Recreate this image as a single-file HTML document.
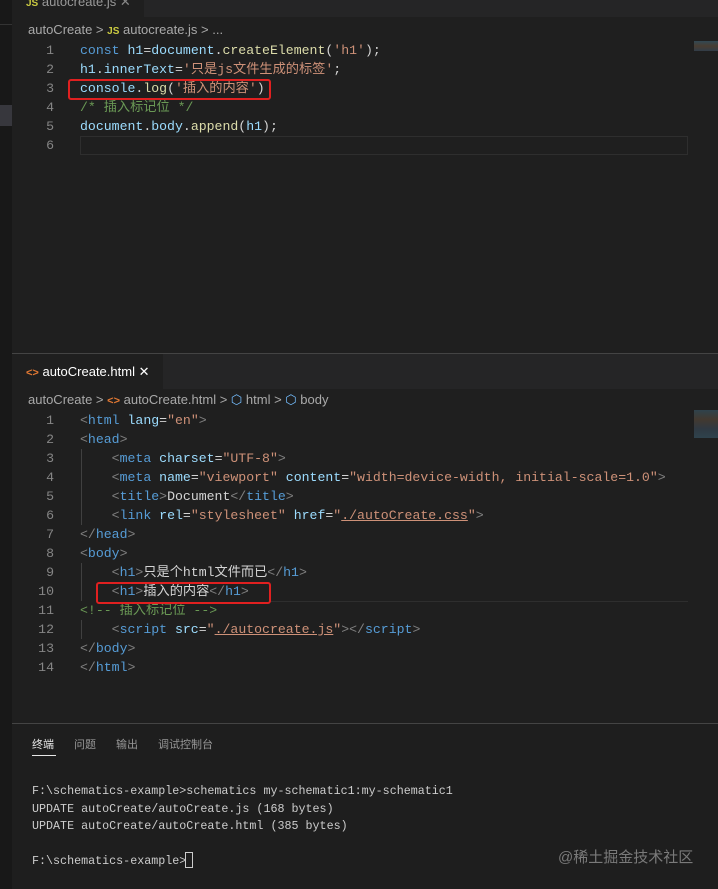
<!DOCTYPE html>
<html><head><meta charset="utf-8"><style>
*{margin:0;padding:0;box-sizing:border-box}
body{width:718px;height:889px;background:#1f1f1f;position:relative;overflow:hidden;font-family:"Liberation Sans","Noto Sans CJK SC",sans-serif;color:#ccc}
.abs{position:absolute}
.code{font-family:"Liberation Mono","Noto Sans CJK SC",monospace;font-size:13.2px;white-space:pre;line-height:19px}
.ln{position:absolute;width:54px;text-align:right;color:#858585;font-family:"Liberation Mono",monospace;font-size:13.2px;line-height:19px}
.k{color:#569cd6}.v{color:#9cdcfe}.f{color:#dcdcaa}.s{color:#ce9178}.c{color:#6a9955}.p{color:#d4d4d4}.g{color:#808080}.w{color:#d4d4d4}
.u{text-decoration:underline;text-decoration-color:#ce9178}
.crumb{font-size:13px;color:#a9a9a9}
.red{position:absolute;border:2px solid #e02020;border-radius:3px}
.term{font-family:"Liberation Mono","Noto Sans CJK SC",monospace;font-size:11.7px;color:#ccc;white-space:pre;line-height:17.5px}
</style></head><body>
<!-- left strip -->
<div class="abs" style="left:0;top:0;width:12px;height:889px;background:#181818"></div>
<div class="abs" style="left:0;top:24px;width:12px;height:1px;background:#333"></div>
<div class="abs" style="left:0;top:105px;width:12px;height:21px;background:#37373d"></div>
<!-- top tab bar -->
<div class="abs" style="left:12px;top:0;width:706px;height:17px;background:#252526"></div>
<div class="abs" style="left:12px;top:0;width:132px;height:17px;background:#1f1f1f"></div>
<div class="abs" style="left:26px;top:-6px;font-size:13px;color:#999"><span style="color:#cbcb41;font-weight:bold;font-size:10px">JS</span> autocreate.js <span style="color:#888">✕</span></div>
<div class="abs crumb" style="left:28px;top:22px">autoCreate &gt; <span style="color:#cbcb41;font-weight:bold;font-size:10px">JS</span> autocreate.js &gt; ...</div>
<!-- JS editor -->
<div class="ln" style="left:0;top:41px">1<br>2<br>3<br>4<br>5<br>6</div>
<div class="abs" style="left:80px;top:136px;width:608px;height:19px;border:1px solid #2e2e2e"></div>
<div class="abs code" style="left:80px;top:41px"><span class="k">const</span> <span class="v">h1</span><span class="w">=</span><span class="v">document</span><span class="w">.</span><span class="f">createElement</span><span class="w">(</span><span class="s">'h1'</span><span class="w">);</span>
<span class="v">h1</span><span class="w">.</span><span class="v">innerText</span><span class="w">=</span><span class="s">'只是js文件生成的标签'</span><span class="w">;</span>
<span class="v">console</span><span class="w">.</span><span class="f">log</span><span class="w">(</span><span class="s">'插入的内容'</span><span class="w">)</span>
<span class="c">/* 插入标记位 */</span>
<span class="v">document</span><span class="w">.</span><span class="v">body</span><span class="w">.</span><span class="f">append</span><span class="w">(</span><span class="v">h1</span><span class="w">);</span></div>
<div class="red" style="left:68px;top:79px;width:203px;height:21px"></div>
<div class="abs" style="left:694px;top:41px;width:24px;height:10px;background:linear-gradient(#3a5a6a,#5a4a3a,#3a4a5a);opacity:.7"></div>
<!-- split -->
<div class="abs" style="left:12px;top:353px;width:706px;height:1px;background:#444"></div>
<div class="abs" style="left:12px;top:354px;width:706px;height:35px;background:#252526"></div>
<div class="abs" style="left:12px;top:354px;width:151px;height:35px;background:#1f1f1f"></div>
<div class="abs" style="left:26px;top:364px;font-size:13px;color:#fff"><span style="color:#e37933;font-weight:bold;font-size:11px">&lt;&gt;</span> autoCreate.html ✕</div>
<div class="abs crumb" style="left:28px;top:392px">autoCreate &gt; <span style="color:#e37933;font-weight:bold;font-size:11px">&lt;&gt;</span> autoCreate.html &gt; <span style="color:#75beff">⬡</span> html &gt; <span style="color:#75beff">⬡</span> body</div>
<!-- HTML editor -->
<div class="ln" style="left:0;top:411px">1<br>2<br>3<br>4<br>5<br>6<br>7<br>8<br>9<br>10<br>11<br>12<br>13<br>14</div>
<div class="abs" style="left:81px;top:449px;width:1px;height:76px;background:#404040"></div>
<div class="abs" style="left:81px;top:563px;width:1px;height:38px;background:#404040"></div>
<div class="abs" style="left:81px;top:620px;width:1px;height:19px;background:#404040"></div>
<div class="abs" style="left:270px;top:601px;width:418px;height:1px;background:#2e2e2e"></div>
<div class="abs code" style="left:80px;top:411px"><span class="g">&lt;</span><span class="k">html</span> <span class="v">lang</span><span class="w">=</span><span class="s">"en"</span><span class="g">&gt;</span>
<span class="g">&lt;</span><span class="k">head</span><span class="g">&gt;</span>
    <span class="g">&lt;</span><span class="k">meta</span> <span class="v">charset</span><span class="w">=</span><span class="s">"UTF-8"</span><span class="g">&gt;</span>
    <span class="g">&lt;</span><span class="k">meta</span> <span class="v">name</span><span class="w">=</span><span class="s">"viewport"</span> <span class="v">content</span><span class="w">=</span><span class="s">"width=device-width, initial-scale=1.0"</span><span class="g">&gt;</span>
    <span class="g">&lt;</span><span class="k">title</span><span class="g">&gt;</span><span class="w">Document</span><span class="g">&lt;/</span><span class="k">title</span><span class="g">&gt;</span>
    <span class="g">&lt;</span><span class="k">link</span> <span class="v">rel</span><span class="w">=</span><span class="s">"stylesheet"</span> <span class="v">href</span><span class="w">=</span><span class="s">"<span class="u">./autoCreate.css</span>"</span><span class="g">&gt;</span>
<span class="g">&lt;/</span><span class="k">head</span><span class="g">&gt;</span>
<span class="g">&lt;</span><span class="k">body</span><span class="g">&gt;</span>
    <span class="g">&lt;</span><span class="k">h1</span><span class="g">&gt;</span><span class="w">只是个html文件而已</span><span class="g">&lt;/</span><span class="k">h1</span><span class="g">&gt;</span>
    <span class="g">&lt;</span><span class="k">h1</span><span class="g">&gt;</span><span class="w">插入的内容</span><span class="g">&lt;/</span><span class="k">h1</span><span class="g">&gt;</span>
<span class="c">&lt;!-- 插入标记位 --&gt;</span>
    <span class="g">&lt;</span><span class="k">script</span> <span class="v">src</span><span class="w">=</span><span class="s">"<span class="u">./autocreate.js</span>"</span><span class="g">&gt;&lt;/</span><span class="k">script</span><span class="g">&gt;</span>
<span class="g">&lt;/</span><span class="k">body</span><span class="g">&gt;</span>
<span class="g">&lt;/</span><span class="k">html</span><span class="g">&gt;</span></div>
<div class="red" style="left:96px;top:582px;width:175px;height:22px"></div>
<div class="abs" style="left:694px;top:410px;width:24px;height:28px;background:linear-gradient(#3a5a6a,#5a4a3a,#3a4a5a,#3a5a6a);opacity:.6"></div>
<!-- panel -->
<div class="abs" style="left:12px;top:723px;width:706px;height:1px;background:#444"></div>
<div class="abs" style="left:12px;top:724px;width:706px;height:165px;background:#1e1e1e"></div>
<div class="abs" style="left:32px;top:736px;font-size:11px;color:#e7e7e7">终端</div>
<div class="abs" style="left:32px;top:755px;width:24px;height:1px;background:#e7e7e7"></div>
<div class="abs" style="left:74px;top:736px;font-size:11px;color:#969696">问题</div>
<div class="abs" style="left:116px;top:736px;font-size:11px;color:#969696">输出</div>
<div class="abs" style="left:158px;top:736px;font-size:11px;color:#969696">调试控制台</div>
<div class="abs term" style="left:32px;top:783px">F:\schematics-example&gt;schematics my-schematic1:my-schematic1
UPDATE autoCreate/autoCreate.js (168 bytes)
UPDATE autoCreate/autoCreate.html (385 bytes)

F:\schematics-example&gt;</div>
<div class="abs" style="left:185px;top:852px;width:8px;height:16px;border:1px solid #ccc"></div>
<div class="abs" style="left:558px;top:846px;font-size:15px;color:#7a7a7a">@稀土掘金技术社区</div>
</body></html>
